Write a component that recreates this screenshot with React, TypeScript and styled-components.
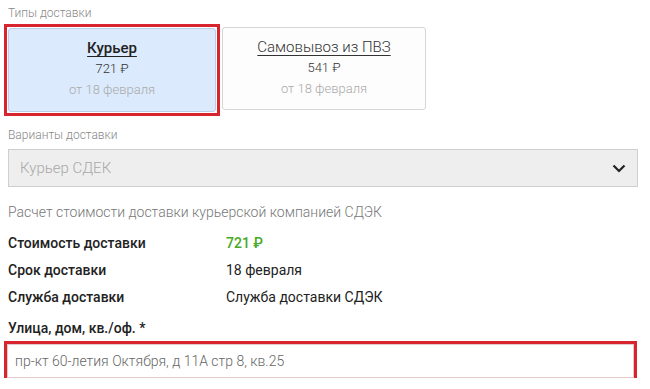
import styled, { createGlobalStyle } from "styled-components";

const GlobalStyle = createGlobalStyle`
  body {
    margin: 0;
    background: #fff;
    font-family: Roboto, "Noto Sans", sans-serif;
    color: #333;
  }
`;

const Page = styled.div`
  padding: 5px 12px 0 8px;
  width: 650px;
  box-sizing: border-box;
`;

const Label = styled.div`
  font-size: 12px;
  font-weight: 300;
  color: #888;
  line-height: 16px;
`;

const Cards = styled.div`
  display: flex;
  align-items: flex-start;
  gap: 2px;
  margin-top: 3px;
  margin-left: -4px;
`;

const Highlight = styled.div`
  border: 3px solid #d8242e;
  padding: 1px;
`;

const Plain = styled.div`
  padding-top: 3px;
`;

const Card = styled.div<{ $active?: boolean }>`
  width: ${(p) => (p.$active ? "208px" : "204px")};
  height: ${(p) => (p.$active ? "84px" : "83px")};
  box-sizing: border-box;
  border: 1px solid ${(p) => (p.$active ? "#b9cfe9" : "#d6d6d6")};
  border-radius: 3px;
  background: ${(p) => (p.$active ? "#dbeafc" : "#fdfdfd")};
  display: flex;
  flex-direction: column;
  align-items: center;
  padding-top: 9px;
`;

const CardTitle = styled.div<{ $active?: boolean }>`
  font-size: 15px;
  font-weight: ${(p) => (p.$active ? 500 : 300)};
  color: ${(p) => (p.$active ? "#222" : "#333")};
  text-decoration: underline;
  text-underline-offset: 3px;
  line-height: 20px;
`;

const CardPrice = styled.div`
  font-size: 13px;
  font-weight: 300;
  color: #333;
  line-height: 17px;
  margin-top: 2px;
`;

const CardDate = styled.div`
  font-size: 13px;
  font-weight: 300;
  color: #aaa;
  line-height: 17px;
  margin-top: 4px;
`;

const SectionLabel = styled(Label)`
  margin-top: 11px;
`;

const Select = styled.div`
  margin-top: 6px;
  height: 38px;
  box-sizing: border-box;
  border: 1px solid #cfcfcf;
  background: #eeeeee;
  display: flex;
  align-items: center;
  justify-content: space-between;
  padding: 0 11px 0 11px;
  font-size: 15px;
  font-weight: 300;
  color: #a8a8a8;
`;

const Note = styled.div`
  margin-top: 16px;
  font-size: 14px;
  font-weight: 300;
  color: #777;
  line-height: 18px;
`;

const InfoGrid = styled.div`
  margin-top: 13px;
  display: grid;
  grid-template-columns: 218px 1fr;
  row-gap: 9px;
  font-size: 14px;
  line-height: 18px;
`;

const Key = styled.div`
  font-weight: 500;
  color: #222;
`;

const Value = styled.div<{ $green?: boolean }>`
  font-weight: ${(p) => (p.$green ? 500 : 400)};
  color: ${(p) => (p.$green ? "#46a823" : "#222")};
`;

const FieldLabel = styled.div`
  margin-top: 13px;
  font-size: 14px;
  font-weight: 500;
  color: #222;
  line-height: 18px;
`;

const Input = styled.div`
  margin-top: 7px;
  margin-left: -1px;
  width: 627px;
  height: 34px;
  box-sizing: border-box;
  border: 1px solid #e4c9cb;
  outline: 3px solid #d8242e;
  outline-offset: 0;
  display: flex;
  align-items: center;
  padding-left: 7px;
  font-size: 14px;
  font-weight: 300;
  color: #666;
`;

function Chevron() {
  return (
    <svg width="14" height="9" viewBox="0 0 14 9">
      <path d="M1.5 1.5 L7 7 L12.5 1.5" fill="none" stroke="#222" strokeWidth="2.2" />
    </svg>
  );
}

export default function App() {
  return (
    <Page>
      <GlobalStyle />
      <Label>Типы доставки</Label>
      <Cards>
        <Highlight>
          <Card $active>
            <CardTitle $active>Курьер</CardTitle>
            <CardPrice>721 ₽</CardPrice>
            <CardDate>от 18 февраля</CardDate>
          </Card>
        </Highlight>
        <Plain>
          <Card>
            <CardTitle>Самовывоз из ПВЗ</CardTitle>
            <CardPrice>541 ₽</CardPrice>
            <CardDate>от 18 февраля</CardDate>
          </Card>
        </Plain>
      </Cards>
      <SectionLabel>Варианты доставки</SectionLabel>
      <Select>
        <span>Курьер СДЕК</span>
        <Chevron />
      </Select>
      <Note>Расчет стоимости доставки курьерской компанией СДЭК</Note>
      <InfoGrid>
        <Key>Стоимость доставки</Key>
        <Value $green>721 ₽</Value>
        <Key>Срок доставки</Key>
        <Value>18 февраля</Value>
        <Key>Служба доставки</Key>
        <Value>Служба доставки СДЭК</Value>
      </InfoGrid>
      <FieldLabel>Улица, дом, кв./оф. *</FieldLabel>
      <Input>пр-кт 60-летия Октября, д 11А стр 8, кв.25</Input>
    </Page>
  );
}
